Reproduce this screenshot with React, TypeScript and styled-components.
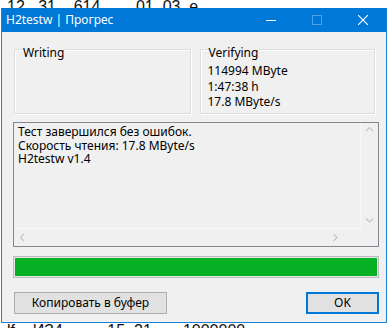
import styled, { createGlobalStyle } from "styled-components";

const Global = createGlobalStyle`
  html, body {
    margin: 0;
    padding: 0;
    background: #ffffff;
  }
  body {
    width: 390px;
    height: 328px;
    overflow: hidden;
    font-family: "Noto Sans", "Open Sans", sans-serif;
    font-size: 12px;
    color: #000;
  }
`;

const Desk = styled.div`
  width: 390px;
  height: 328px;
  overflow: hidden;
  display: flex;
  flex-direction: column;
`;

const Strip = styled.div<{ $h: number }>`
  height: ${(p) => p.$h}px;
  overflow: hidden;
  display: flex;
  align-items: flex-end;
  flex-shrink: 0;
`;

const StripText = styled.div<{ $shift: number }>`
  font-family: "Liberation Sans", Arial, sans-serif;
  font-size: 16px;
  line-height: 16px;
  white-space: pre;
  padding-left: 7px;
  color: #111;
  transform: translateY(${(p) => p.$shift}px);
`;

const Window = styled.div`
  margin-left: 1px;
  width: 386px;
  border: 1px solid #1a82d6;
  border-top: none;
  box-sizing: border-box;
  display: flex;
  flex-direction: column;
  flex-shrink: 0;
`;

const TitleBar = styled.div`
  height: 24px;
  background: #0078d7;
  display: flex;
  align-items: center;
  color: #fff;
`;

const Title = styled.div`
  flex: 1;
  padding-left: 4px;
  font-size: 12px;
  line-height: 24px;
`;

const CaptionButton = styled.div`
  width: 46px;
  height: 24px;
  display: flex;
  align-items: center;
  justify-content: center;
`;

const Client = styled.div`
  background: #f0f0f0;
  padding: 17px 7px 8px 11px;
  display: flex;
  flex-direction: column;
`;

const GroupRow = styled.div`
  display: flex;
  gap: 9px;
  padding: 0 4px 0 1px;
  height: 65px;
`;

const Group = styled.div<{ $w: number }>`
  position: relative;
  width: ${(p) => p.$w}px;
  box-sizing: border-box;
  border: 1px solid #dcdcdc;
  box-shadow: inset 1px 1px 0 #ffffff, 1px 1px 0 #ffffff;
  padding: 13px 0 0 7px;
`;

const GroupLabel = styled.span`
  position: absolute;
  top: -4px;
  left: 7px;
  padding: 0 1px;
  background: #f0f0f0;
  line-height: 14px;
`;

const Line = styled.div`
  line-height: 15.5px;
`;

const LogBox = styled.div`
  margin-top: 8px;
  height: 125px;
  box-sizing: border-box;
  border: 1px solid #828790;
  display: grid;
  grid-template-columns: 1fr 17px;
  grid-template-rows: 1fr 17px;
`;

const LogText = styled.div`
  padding: 2px 0 0 4px;
  line-height: 13.5px;
  border-right: 1px solid #f8f8f8;
  border-bottom: 1px solid #f8f8f8;
`;

const VScroll = styled.div`
  display: flex;
  flex-direction: column;
  justify-content: space-between;
  align-items: center;
  padding: 3px 0 5px;
`;

const HScroll = styled.div`
  display: flex;
  justify-content: space-between;
  align-items: center;
  padding: 0 22px 0 5px;
`;

const Progress = styled.div`
  margin-top: 9px;
  height: 22px;
  box-sizing: border-box;
  border: 1px solid #bcbcbc;
  padding: 1px;
  background: #e6e6e6;
`;

const Fill = styled.div`
  height: 100%;
  background: #06b025;
`;

const Buttons = styled.div`
  margin-top: 14px;
  display: flex;
  justify-content: space-between;
  padding-left: 1px;
`;

const Button = styled.button<{ $w: number; $default?: boolean }>`
  width: ${(p) => p.$w}px;
  height: 22px;
  box-sizing: border-box;
  background: #e1e1e1;
  border: ${(p) => (p.$default ? "2px solid #0078d7" : "1px solid #adadad")};
  font-family: "Noto Sans", "Open Sans", sans-serif;
  font-size: 12px;
  color: #000;
  padding: 0;
  line-height: 16px;
`;

const Chevron = ({ dir }: { dir: "up" | "down" | "left" | "right" }) => {
  const d = {
    up: "M1 5 L4.5 1.5 L8 5",
    down: "M1 1.5 L4.5 5 L8 1.5",
    left: "M5 1 L1.5 4.5 L5 8",
    right: "M1.5 1 L5 4.5 L1.5 8",
  }[dir];
  const horiz = dir === "left" || dir === "right";
  return (
    <svg width={horiz ? 7 : 9} height={horiz ? 9 : 7} viewBox={horiz ? "0 0 7 9" : "0 0 9 7"}>
      <path d={d} fill="none" stroke="#c4c4c4" strokeWidth="1.2" />
    </svg>
  );
};

export default function App() {
  return (
    <Desk>
      <Global />
      <Strip $h={8}>
        <StripText $shift={7}>{"12   31    614        01  03  e"}</StripText>
      </Strip>
      <Window>
        <TitleBar>
          <Title>H2testw | Прогрес</Title>
          <CaptionButton>
            <svg width="10" height="10" viewBox="0 0 10 10">
              <path d="M0 5.5 H10" stroke="#fff" strokeWidth="1" />
            </svg>
          </CaptionButton>
          <CaptionButton>
            <svg width="10" height="10" viewBox="0 0 10 10">
              <rect x="0.5" y="0.5" width="9" height="9" fill="none" stroke="#4ca2e6" strokeWidth="1" />
            </svg>
          </CaptionButton>
          <CaptionButton>
            <svg width="10" height="10" viewBox="0 0 10 10">
              <path d="M0 0 L10 10 M10 0 L0 10" stroke="#fff" strokeWidth="1.1" />
            </svg>
          </CaptionButton>
        </TitleBar>
        <Client>
          <GroupRow>
            <Group $w={177}>
              <GroupLabel>Writing</GroupLabel>
            </Group>
            <Group $w={176}>
              <GroupLabel>Verifying</GroupLabel>
              <Line>114994 MByte</Line>
              <Line>1:47:38 h</Line>
              <Line>17.8 MByte/s</Line>
            </Group>
          </GroupRow>
          <LogBox>
            <LogText>
              Тест завершился без ошибок.
              <br />
              Скорость чтения: 17.8 MByte/s
              <br />
              H2testw v1.4
            </LogText>
            <VScroll>
              <Chevron dir="up" />
              <Chevron dir="down" />
            </VScroll>
            <HScroll>
              <Chevron dir="left" />
              <Chevron dir="right" />
            </HScroll>
            <div />
          </LogBox>
          <Progress>
            <Fill />
          </Progress>
          <Buttons>
            <Button $w={153}>Копировать в буфер</Button>
            <Button $w={73} $default>
              OK
            </Button>
          </Buttons>
        </Client>
      </Window>
      <Strip $h={8}>
        <StripText $shift={8}>{"lf    ИЗ4          15  21       1000000"}</StripText>
      </Strip>
    </Desk>
  );
}
